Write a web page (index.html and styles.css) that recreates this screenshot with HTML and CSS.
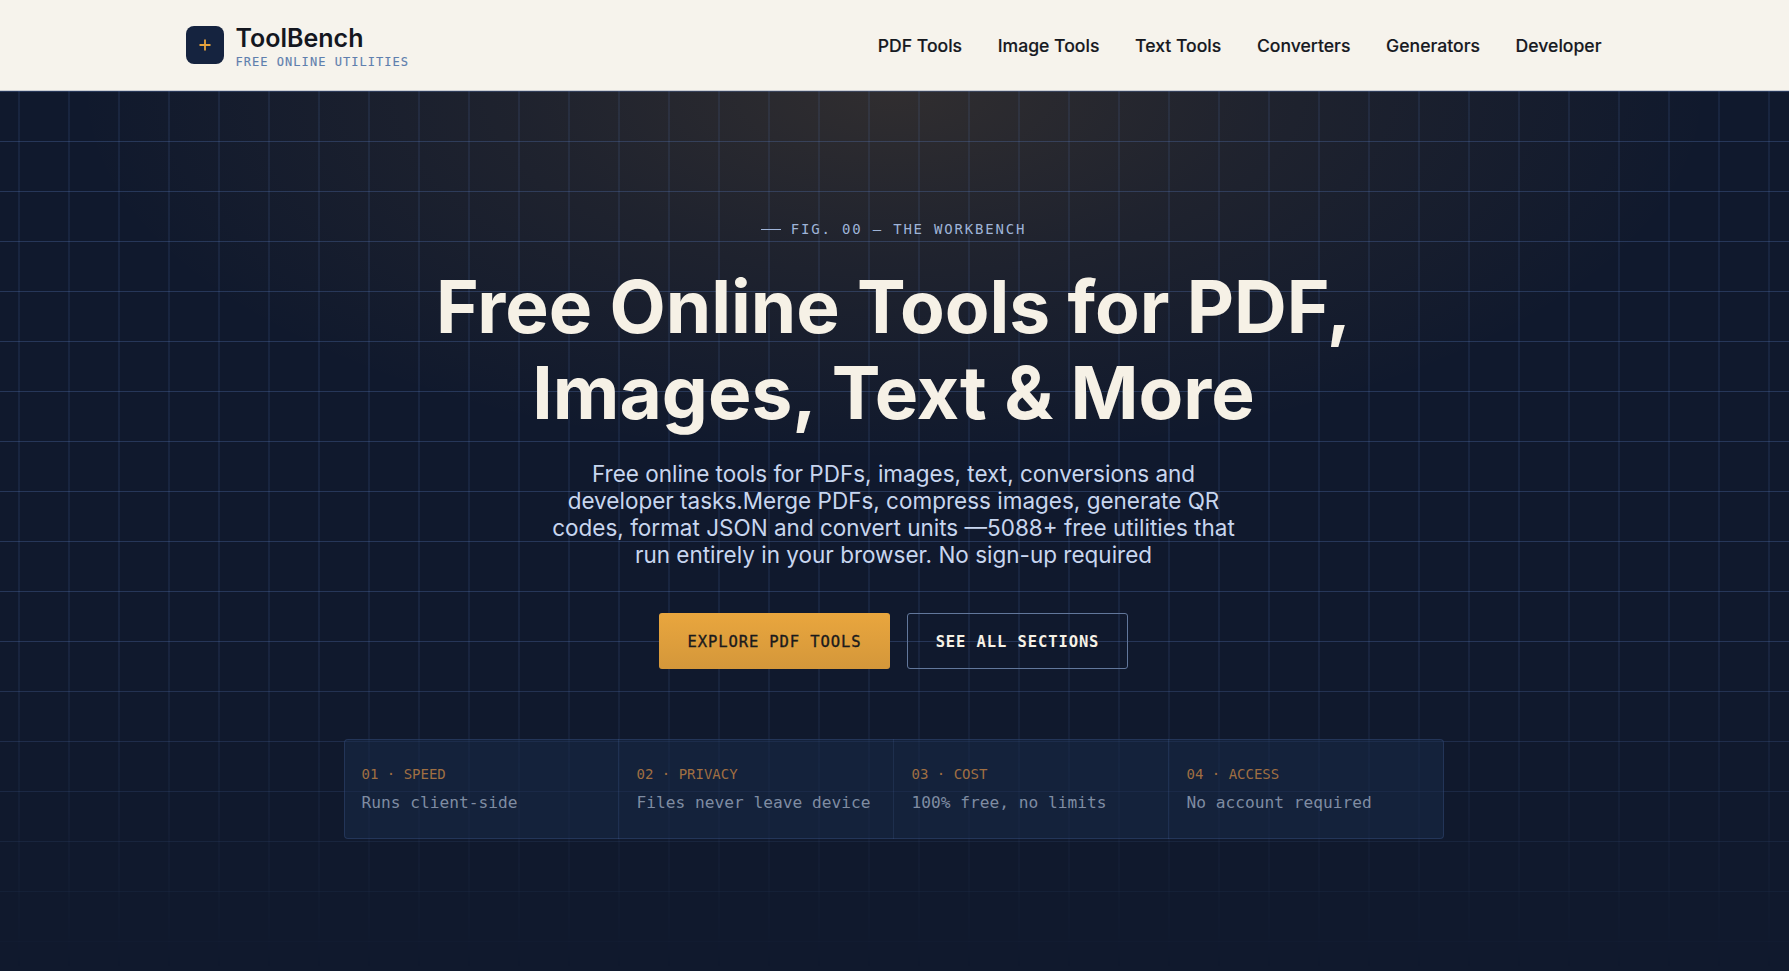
FILE: index.html
```html
<!DOCTYPE html>
<html lang="en">
<head>
<meta charset="utf-8">
<title>ToolBench</title>
<link rel="stylesheet" href="styles.css">
</head>
<body>
<header class="site-header">
  <div class="header-inner">
    <a class="brand" href="#">
      <span class="brand-mark"><svg width="14" height="14" viewBox="0 0 14 14"><path d="M7 1.5v11M1.5 7h11" stroke="#e8a33d" stroke-width="1.8" fill="none"/></svg></span>
      <span class="brand-text">
        <span class="brand-name">ToolBench</span>
        <span class="brand-sub">FREE ONLINE UTILITIES</span>
      </span>
    </a>
    <nav class="nav">
      <a href="#">PDF Tools</a>
      <a href="#">Image Tools</a>
      <a href="#">Text Tools</a>
      <a href="#">Converters</a>
      <a href="#">Generators</a>
      <a href="#">Developer</a>
    </nav>
  </div>
</header>
<main class="hero">
  <div class="hero-glow"></div>
  <div class="hero-grid"></div>
  <div class="hero-content">
    <p class="eyebrow">FIG. 00 — THE WORKBENCH</p>
    <h1 class="title">Free Online Tools for PDF,<br>Images, Text &amp; More</h1>
    <p class="lead">Free online tools for PDFs, images, text, conversions and developer tasks.Merge PDFs, compress images, generate QR codes, format JSON and convert units —5088+ free utilities that run entirely in your browser. No sign-up required</p>
    <div class="actions">
      <a class="btn btn-primary" href="#">EXPLORE PDF TOOLS</a>
      <a class="btn btn-ghost" href="#">SEE ALL SECTIONS</a>
    </div>
    <div class="stats">
      <div class="stat"><div class="stat-label">01 · SPEED</div><div class="stat-value">Runs client-side</div></div>
      <div class="stat"><div class="stat-label">02 · PRIVACY</div><div class="stat-value">Files never leave device</div></div>
      <div class="stat"><div class="stat-label">03 · COST</div><div class="stat-value">100% free, no limits</div></div>
      <div class="stat"><div class="stat-label">04 · ACCESS</div><div class="stat-value">No account required</div></div>
    </div>
  </div>
</main>
</body>
</html>
```
FILE: styles.css
```css
* { box-sizing: border-box; }
html, body { margin: 0; height: 100%; }
body {
  display: flex;
  flex-direction: column;
  overflow: hidden;
  background: #10192d;
  font-family: "Inter", "Liberation Sans", sans-serif;
}
a { text-decoration: none; color: inherit; }

.site-header {
  flex: none;
  height: 91px;
  padding-right: 2px;
  background: #f6f3ec;
  border-bottom: 1px solid #c9ccd2;
}
.header-inner {
  max-width: 1416px;
  height: 100%;
  margin: 0 auto;
  display: flex;
  align-items: center;
  justify-content: space-between;
}
.brand { display: flex; align-items: center; gap: 12px; }
.brand-mark {
  width: 38px;
  height: 38px;
  border-radius: 8px;
  background: #15233f;
  display: flex;
  align-items: center;
  justify-content: center;
}
.brand-text { display: flex; flex-direction: column; margin-top: 2px; }
.brand-name {
  font-size: 25px;
  line-height: 30px;
  font-weight: 600;
  color: #14171f;
}
.brand-sub {
  margin-top: 2px;
  font-family: "DejaVu Sans Mono", "Liberation Mono", monospace;
  font-size: 12px;
  line-height: 15px;
  letter-spacing: 1.04px;
  color: #5f7fae;
  -webkit-text-stroke: 0.15px #5f7fae;
}
.nav { display: flex; gap: 35.7px; padding-top: 1px; }
.nav a { font-size: 17.6px; font-weight: 500; color: #16191f; -webkit-text-stroke: 0.15px #16191f; }

.hero {
  flex: 1;
  position: relative;
  display: flex;
  align-items: center;
  justify-content: center;
  padding: 0 2px 3px 0;
  background: #10192d;
  overflow: hidden;
}
.hero-glow {
  position: absolute;
  inset: 0;
  background: radial-gradient(ellipse 820px 370px at 50% 0, rgba(232, 163, 61, 0.15), rgba(232, 163, 61, 0.07) 45%, rgba(232, 163, 61, 0) 100%);
}
.hero-grid {
  position: absolute;
  inset: 0;
  background-image:
    linear-gradient(to right, rgba(90, 125, 190, 0.13) 2px, transparent 2px),
    linear-gradient(to bottom, rgba(90, 125, 190, 0.3) 1px, transparent 1px);
  background-size: 50px 50px;
  background-position: 18px 0, 0 0;
  -webkit-mask-image: linear-gradient(to bottom, #000 0, #000 62%, rgba(0,0,0,0.1) 96%, rgba(0,0,0,0) 100%);
  mask-image: linear-gradient(to bottom, #000 0, #000 62%, rgba(0,0,0,0.1) 96%, rgba(0,0,0,0) 100%);
}
.hero-content {
  position: relative;
  width: 1100px;
  display: flex;
  flex-direction: column;
  align-items: center;
}
.eyebrow {
  margin: 0 0 26px;
  display: flex;
  align-items: center;
  gap: 10px;
  font-family: "DejaVu Sans Mono", "Liberation Mono", monospace;
  font-size: 14px;
  line-height: 18px;
  letter-spacing: 1.8px;
  color: #9fb4d8;
}
.eyebrow::before {
  content: "";
  width: 20px;
  height: 1px;
  background: #9fb4d8;
}
.title {
  margin: 0 0 25px;
  font-size: 73px;
  line-height: 85.5px;
  font-weight: 700;
  text-align: center;
  color: #f6f1e6;
}
.lead {
  margin: 0 0 45px;
  width: 700px;
  font-size: 22.5px;
  line-height: 27px;
  text-align: center;
  color: #c8d6ef;
}
.actions { display: flex; gap: 17px; margin-bottom: 70px; }
.btn {
  display: flex;
  align-items: center;
  justify-content: center;
  height: 56px;
  padding-top: 2px;
  font-family: "DejaVu Sans Mono", "Liberation Mono", monospace;
  font-size: 15.5px;
  letter-spacing: 0.9px;
  border-radius: 3px;
}
.btn-primary {
  width: 231px;
  background: linear-gradient(to bottom, #e9a63e, #d4973a);
  color: #1a1a1c;
  -webkit-text-stroke: 0.35px #1a1a1c;
}
.btn-ghost {
  width: 221px;
  border: 1px solid #62779b;
  color: #f6f1e6;
  font-weight: 700;
}
.stats {
  width: 100%;
  height: 100px;
  display: grid;
  grid-template-columns: repeat(4, 1fr);
  background: rgba(26, 44, 76, 0.48);
  box-shadow: inset 0 0 0 1px rgba(90, 125, 190, 0.22);
  border-radius: 4px;
}
.stat {
  padding: 26px 18px 0;
  border-right: 1px solid rgba(90, 125, 190, 0.14);
}
.stat:last-child { border-right: 0; }
.stat-label {
  font-family: "DejaVu Sans Mono", "Liberation Mono", monospace;
  font-size: 14px;
  line-height: 18px;
  color: #a06f42;
}
.stat-value {
  margin-top: 10px;
  font-family: "DejaVu Sans Mono", "Liberation Mono", monospace;
  font-size: 16.2px;
  line-height: 20px;
  color: #7f8ca2;
}
```
